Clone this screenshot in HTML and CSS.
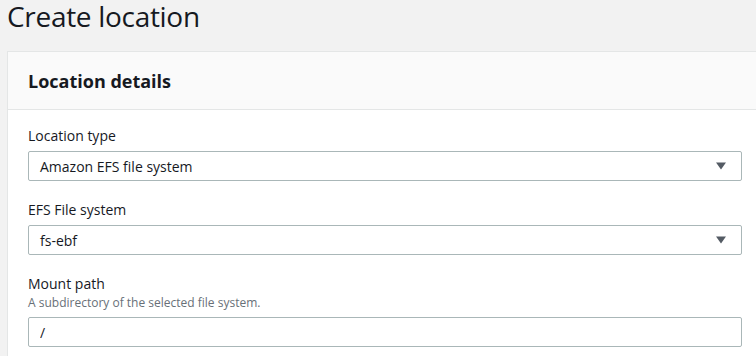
FILE: index.html
```html
<!DOCTYPE html>
<html lang="en">
<head>
  <meta charset="UTF-8" />
  <meta name="viewport" content="width=device-width, initial-scale=1.0"/>
  <title>Create location</title>
  <link rel="stylesheet" href="styles.css">
</head>
<body>
  <h1 class="page-title">Create location</h1>

  <div class="card">
    <div class="card-header">
      <h2>Location details</h2>
    </div>

    <div class="card-body">
      <div class="form-field">
        <label class="field-label">Location type</label>
        <div class="select-box">
          <span>Amazon EFS file system</span>
          <svg class="caret" width="10" height="8" viewBox="0 0 10 8"><path d="M0 0.5h10L5 7.5z" fill="#545b64"/></svg>
        </div>
      </div>

      <div class="form-field">
        <label class="field-label">EFS File system</label>
        <div class="select-box">
          <span>fs-ebf</span>
          <svg class="caret" width="10" height="8" viewBox="0 0 10 8"><path d="M0 0.5h10L5 7.5z" fill="#545b64"/></svg>
        </div>
      </div>

      <div class="form-field">
        <label class="field-label" for="mountPath">Mount path</label>
        <div class="field-hint">A subdirectory of the selected file system.</div>
        <input type="text" id="mountPath" class="text-input" value="/" />
      </div>
    </div>
  </div>
</body>
</html>
```

FILE: styles.css
```css
:root {
  --text-color: #16191f;
  --hint-color: #687078;
  --border-color: #aab7b8;
  --page-bg: #f2f2f2;
  --card-border: #e4e6e6;
}

* {
  box-sizing: border-box;
  margin: 0;
  padding: 0;
}

body {
  font-family: 'Open Sans', 'Noto Sans', sans-serif;
  background-color: var(--page-bg);
  color: var(--text-color);
  overflow: hidden;
}

.page-title {
  font-size: 28px;
  font-weight: 400;
  line-height: 28px;
  letter-spacing: -0.3px;
  padding: 2px 0 0 7px;
}

.card {
  margin: 21px -7px 0 7px;
  background-color: #ffffff;
  border: 1px solid var(--card-border);
}

.card-header {
  background-color: #fafafa;
  border-bottom: 1px solid var(--card-border);
  padding: 17px 20px 16px;
}

.card-header h2 {
  font-size: 18px;
  font-weight: 700;
  line-height: 24px;
}

.card-body {
  padding: 15px 20px 20px;
  display: flex;
  flex-direction: column;
  gap: 18px;
}

.field-label {
  display: block;
  font-size: 14px;
  line-height: 22px;
  margin-bottom: 4px;
}

.field-hint {
  font-size: 12px;
  line-height: 16px;
  color: var(--hint-color);
  margin-top: -4px;
  margin-bottom: 6px;
}

.select-box,
.text-input {
  display: flex;
  align-items: center;
  justify-content: space-between;
  width: 100%;
  height: 30px;
  padding: 0 15px 0 11px;
  border: 1px solid var(--border-color);
  border-radius: 2px;
  background-color: #ffffff;
  font-family: inherit;
  font-size: 14px;
  color: var(--text-color);
}

.text-input {
  outline: none;
}
```
